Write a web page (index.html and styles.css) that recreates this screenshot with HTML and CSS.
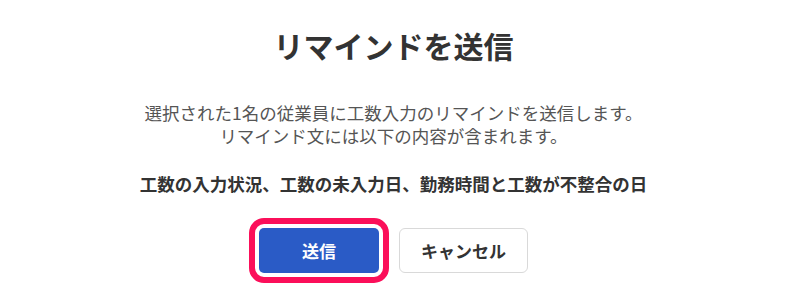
FILE: index.html
```html
<!DOCTYPE html>
<html lang="ja">
<head>
<meta charset="utf-8">
<title>リマインドを送信</title>
<link rel="stylesheet" href="styles.css">
</head>
<body>
<div class="dialog">
  <h2 class="dialog-title">リマインドを送信</h2>
  <p class="dialog-desc">選択された1名の従業員に工数入力のリマインドを送信します。<br>リマインド文には以下の内容が含まれます。</p>
  <p class="dialog-items">工数の入力状況、工数の未入力日、勤務時間と工数が不整合の日</p>
  <div class="dialog-actions">
    <button class="btn btn-primary" type="button">送信</button>
    <button class="btn btn-secondary" type="button">キャンセル</button>
  </div>
</div>
</body>
</html>
```
FILE: styles.css
```css
html, body {
  margin: 0;
  padding: 0;
  background: #ffffff;
}
body {
  font-family: "Noto Sans CJK JP", "Noto Sans", sans-serif;
  color: #333333;
  min-height: 297px;
}
.dialog {
  display: flex;
  flex-direction: column;
  align-items: center;
  text-align: center;
  padding: 24px 0 24px;
}
.dialog-title {
  margin: 0;
  font-size: 30px;
  line-height: 42px;
  font-weight: 700;
  color: #333333;
}
.dialog-desc {
  margin: 35px 0 0;
  font-size: 17.5px;
  line-height: 23px;
  color: #555555;
}
.dialog-items {
  margin: 25px 0 0;
  font-size: 17.5px;
  line-height: 23px;
  font-weight: 700;
  color: #333333;
}
.dialog-actions {
  margin-top: 33px;
  display: flex;
  gap: 20px;
}
.btn {
  font-family: inherit;
  font-size: 17px;
  font-weight: 700;
  height: 45px;
  border-radius: 5px;
  padding: 0;
  cursor: pointer;
}
.btn-primary {
  width: 120px;
  background: #2a5bc6;
  color: #ffffff;
  border: none;
  outline: 6px solid #fb0f5a;
  outline-offset: 4px;
}
.btn-secondary {
  width: 129px;
  background: #ffffff;
  color: #333333;
  border: 1px solid #d9d9d9;
  border-radius: 6px;
}
```
